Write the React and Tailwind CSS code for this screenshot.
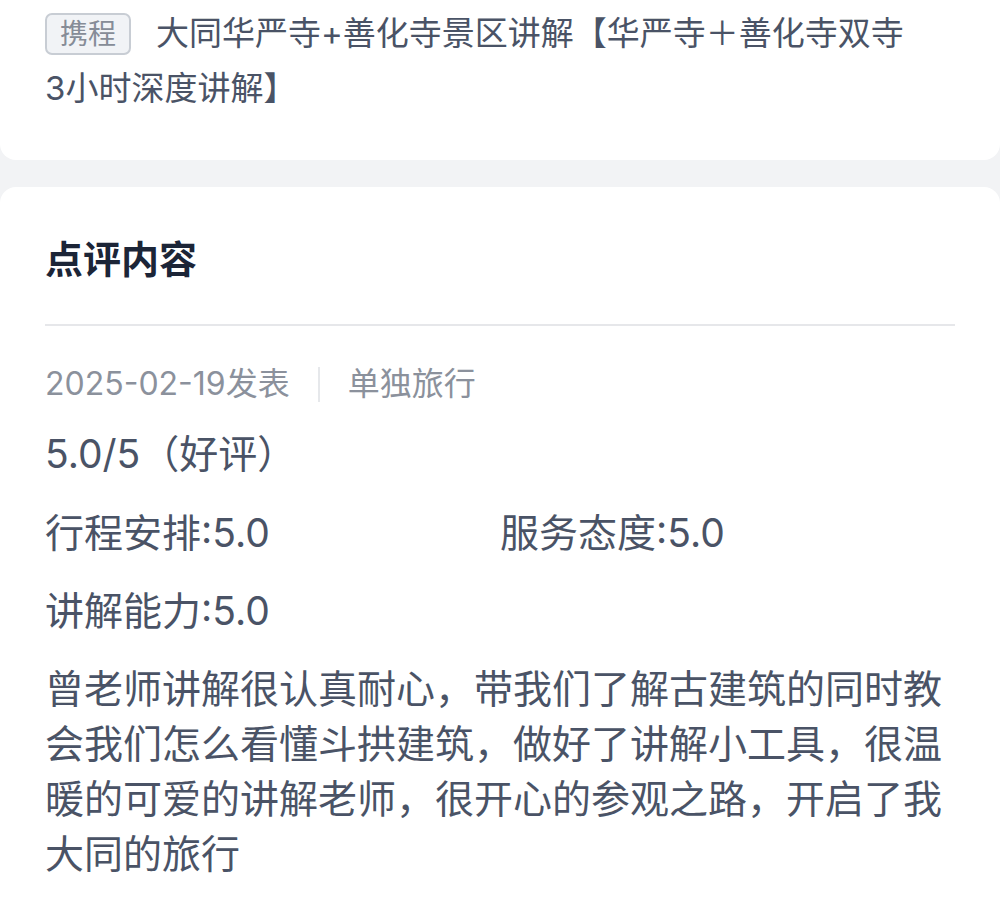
export default function App() {
  const font = { fontFamily: 'Inter, "Noto Sans CJK SC", sans-serif' };
  return (
    <div className="min-h-[910px] w-[1000px] bg-[#f2f3f5]" style={font}>
      <div className="bg-white rounded-b-2xl px-[45px] pt-[6px] pb-[44px]">
        <div className="text-[33px] leading-[55px] text-[#4a5366]">
          <span className="inline-block align-middle h-[42px] leading-[38px] px-[13px] border-2 border-[#c8cdd4] rounded-[7px] bg-[#f1f3f6] text-[28px] text-[#868c97] mr-[25px] relative -top-[2px]">
            携程
          </span>
          大同华严寺+善化寺景区讲解【华严寺＋善化寺双寺
          <span className="whitespace-nowrap">3小时深度讲解】</span>
        </div>
      </div>

      <div className="mt-[27px] bg-white rounded-t-2xl px-[45px] pt-[46px] pb-[40px] min-h-[723px]">
        <h2 className="text-[38px] leading-[53px] font-bold text-[#1c2537]">点评内容</h2>
        <div className="mt-[38px] h-[2px] bg-[#e6e7ea]" />

        <div className="mt-[36px] flex items-center h-[44px] text-[32px] text-[#8b919c]">
          <span>2025-02-19发表</span>
          <span className="mx-[28px] w-[2px] h-[35px] bg-[#e6e8eb]" />
          <span>单独旅行</span>
        </div>

        <div className="mt-[20px] text-[39px] leading-[55px] text-[#4a5366]">5.0/5（好评）</div>

        <div className="mt-[24px] grid grid-cols-2 text-[39px] leading-[55px] text-[#4a5366]">
          <div>行程安排:5.0</div>
          <div>服务态度:5.0</div>
        </div>
        <div className="mt-[23px] text-[39px] leading-[55px] text-[#4a5366]">讲解能力:5.0</div>

        <p className="mt-[23px] text-[39px] leading-[55px] text-[#4a5366]">
          曾老师讲解很认真耐心，带我们了解古建筑的同时教会我们怎么看懂斗拱建筑，做好了讲解小工具，很温暖的可爱的讲解老师，很开心的参观之路，开启了我大同的旅行
        </p>
      </div>
    </div>
  );
}
